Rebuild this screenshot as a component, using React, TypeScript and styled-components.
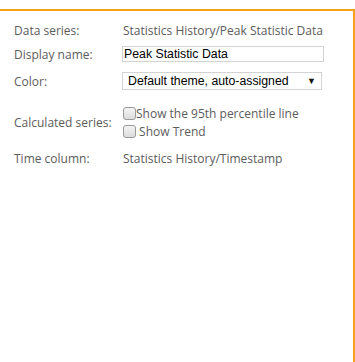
import React, { FC, useState, ChangeEvent } from 'react';
import styled, { createGlobalStyle } from 'styled-components';

const GlobalStyle = createGlobalStyle`
    html, body {
        margin: 0;
        padding: 0;
        background: #ffffff;
    }
`;

const App: FC = () => {
    const [displayName, setDisplayName] = useState<string>("Peak Statistic Data");

    return (
        <>
            <GlobalStyle />
            <StyledPanel>
                <StyledForm>
                    <StyledRow $top={9} $height={20}>
                        <StyledLabel>Data series:</StyledLabel>
                        <StyledValue>Statistics History/Peak Statistic Data</StyledValue>
                    </StyledRow>
                    <StyledRow $top={5} $height={18}>
                        <StyledLabel>Display name:</StyledLabel>
                        <StyledInput
                            type="text"
                            value={displayName}
                            onChange={(event: ChangeEvent<HTMLInputElement>) => setDisplayName(event.target.value)}
                        />
                    </StyledRow>
                    <StyledRow $top={9} $height={18}>
                        <StyledLabel>Color:</StyledLabel>
                        <StyledSelect>
                            <span>Default theme, auto-assigned</span>
                            <StyledArrow>▼</StyledArrow>
                        </StyledSelect>
                    </StyledRow>
                    <StyledRow $top={14} $height={36}>
                        <StyledLabel>Calculated series:</StyledLabel>
                        <StyledChecks>
                            <StyledCheckLine>
                                <StyledCheckbox />
                                <span>Show the 95th percentile line</span>
                            </StyledCheckLine>
                            <StyledCheckLine>
                                <StyledCheckbox />
                                <span>&nbsp;Show Trend</span>
                            </StyledCheckLine>
                        </StyledChecks>
                    </StyledRow>
                    <StyledRow $top={9} $height={18}>
                        <StyledLabel>Time column:</StyledLabel>
                        <StyledValue>Statistics History/Timestamp</StyledValue>
                    </StyledRow>
                </StyledForm>
            </StyledPanel>
        </>
    );
}

const StyledPanel = styled.div`
    margin-top: 9px;
    width: 355px;
    height: 353px;
    box-sizing: border-box;
    border-top: 2px solid #f7a21b;
    border-right: 2px solid #f7a21b;
    font-family: "Open Sans", "Liberation Sans", sans-serif;
    font-size: 12px;
    color: #5c5c5c;
`;

const StyledForm = styled.div`
    display: flex;
    flex-direction: column;
    padding-left: 14px;
`;

const StyledRow = styled.div<{ $top: number; $height: number }>`
    display: grid;
    grid-template-columns: 108px 1fr;
    align-items: center;
    margin-top: ${p => p.$top}px;
    height: ${p => p.$height}px;
`;

const StyledLabel = styled.div`
    white-space: nowrap;
`;

const StyledValue = styled.div`
    white-space: nowrap;
    padding-left: 1px;
`;

const StyledInput = styled.input`
    width: 202px;
    height: 16px;
    box-sizing: border-box;
    margin: 0;
    border: 1px solid #d3d3d3;
    padding: 0 1px;
    font-family: "Liberation Sans", Arial, sans-serif;
    font-size: 12.3px;
    color: #000000;
    outline: none;
`;

const StyledSelect = styled.div`
    width: 200px;
    height: 18px;
    box-sizing: border-box;
    border: 1px solid #d3d3d3;
    padding: 0 5px 0 5px;
    display: flex;
    align-items: center;
    justify-content: space-between;
    font-family: "Liberation Sans", Arial, sans-serif;
    font-size: 12.3px;
    color: #000000;
`;

const StyledArrow = styled.span`
    font-size: 9px;
    color: #111111;
`;

const StyledChecks = styled.div`
    display: flex;
    flex-direction: column;
    gap: 5px;
`;

const StyledCheckLine = styled.div`
    display: flex;
    align-items: center;
    height: 13px;
    white-space: nowrap;
`;

const StyledCheckbox = styled.span`
    display: inline-block;
    width: 11px;
    height: 11px;
    margin-left: 1px;
    border: 1px solid #9a9a9a;
    border-radius: 3px;
    background: linear-gradient(#f4f4f4, #dcdcdc);
`;

export default App;
